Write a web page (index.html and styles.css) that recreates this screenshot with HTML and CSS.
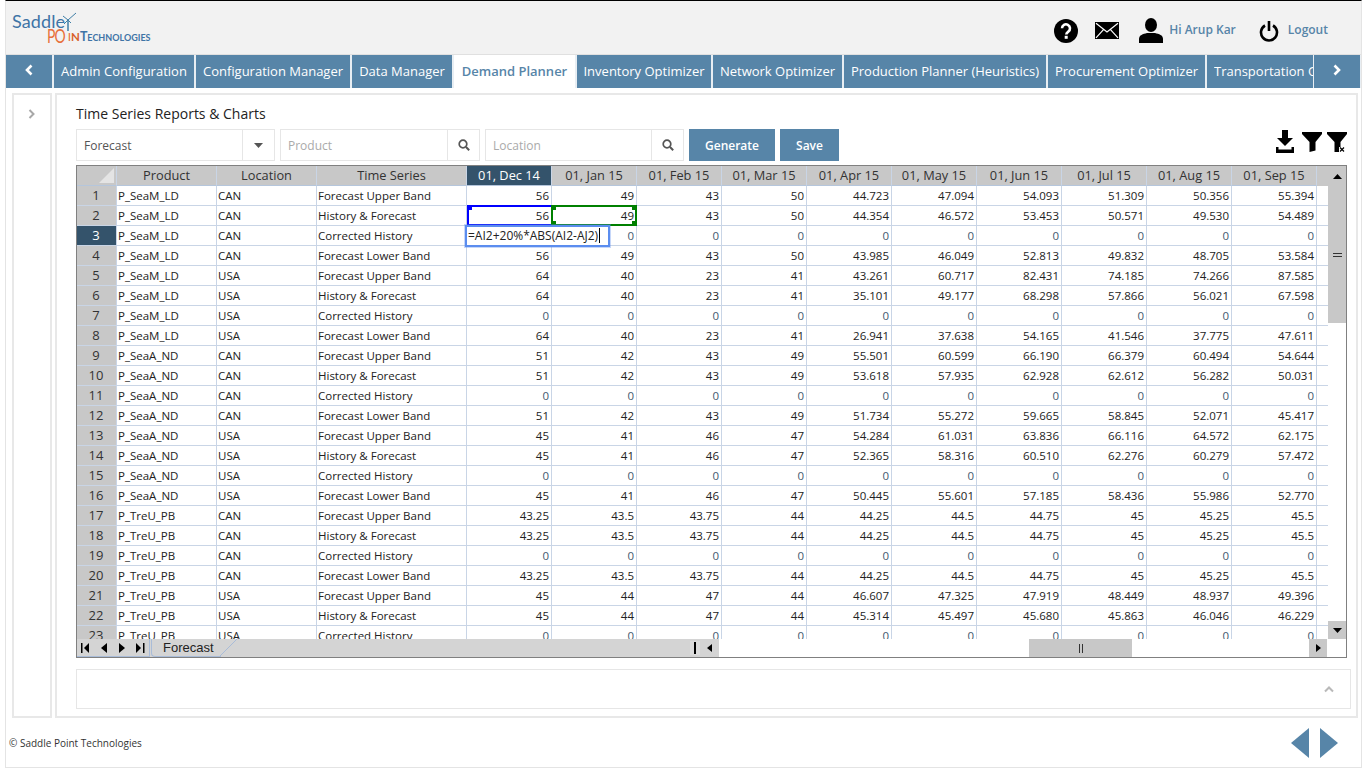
FILE: index.html
```html
<!DOCTYPE html>
<html lang="en">
<head>
<meta charset="utf-8">
<title>Time Series Reports &amp; Charts</title>
<link rel="stylesheet" href="styles.css">
</head>
<body>
<div class="frame">
  <header class="top">
    <div class="logo">
      <div class="logo-l1">Saddle</div>
      <div class="logo-l2"><span class="lo-po">PO</span><span class="lo-i">I</span><span class="lo-n">N</span><span class="bl">Technologies</span></div>
      <svg class="mill" width="18" height="20" viewBox="0 0 18 20"><path d="M8 8 L16 1 M8 8 L3 4 M8 8 L4 12 M8 8 L11 11" stroke="#3f7ea6" stroke-width="1" fill="none"/><path d="M8 8 V19" stroke="#3f7ea6" stroke-width="1.500" fill="none"/></svg>
    </div>
    <div class="top-right">
      <svg class="ic-help" width="24" height="24" viewBox="0 0 24 24"><circle cx="12" cy="12" r="12" fill="#000"/><path d="M8 9.300a4 4 0 1 1 6.300 3.300c-1.300.9-2 1.400-2 3" fill="none" stroke="#fff" stroke-width="2.600"/><rect x="10.700" y="16.800" width="3" height="3" fill="#fff"/></svg>
      <svg class="ic-mail" width="24" height="17" viewBox="0 0 24 17"><rect width="24" height="17" fill="#000"/><path d="M1 1.200 L12 10 L23 1.200 M1 15.800 L8.500 7.600 M23 15.800 L15.500 7.600" fill="none" stroke="#fff" stroke-width="1.200"/></svg>
      <svg class="ic-user" width="24" height="25" viewBox="0 0 24 25"><ellipse cx="12" cy="7" rx="6" ry="7"/><path d="M0 25v-4c0-4 4-5 8-6h8c4 1 8 2 8 6v4z"/></svg>
      <span class="hi">Hi Arup Kar</span>
      <svg class="ic-power" width="20" height="22" viewBox="0 0 20 22"><path d="M6 5.500a8 8 0 1 0 8 0" fill="none" stroke="#000" stroke-width="2.600"/><rect x="8.700" y="1" width="2.600" height="10" fill="#000"/></svg>
      <span class="logout">Logout</span>
    </div>
  </header>
  <nav class="tabs">
    <div class="tab arrow"><svg width="10" height="12" viewBox="0 0 10 12"><path d="M7.500 1.500 L3 6 L7.500 10.500" fill="none" stroke="#fff" stroke-width="2.600"/></svg></div>
    <div class="tab t1">Admin Configuration</div>
    <div class="tab t2">Configuration Manager</div>
    <div class="tab t3">Data Manager</div>
    <div class="tab t4 active">Demand Planner</div>
    <div class="tab t5">Inventory Optimizer</div>
    <div class="tab t6">Network Optimizer</div>
    <div class="tab t7">Production Planner (Heuristics)</div>
    <div class="tab t8">Procurement Optimizer</div>
    <div class="tab t9"><span class="clip">Transportation Optimizer</span></div>
    <div class="tab arrow next"><svg width="10" height="12" viewBox="0 0 10 12"><path d="M2.500 1.500 L7 6 L2.500 10.500" fill="none" stroke="#fff" stroke-width="2.600"/></svg></div>
  </nav>
  <div class="work">
    <aside class="side"><svg width="8" height="10" viewBox="0 0 8 10"><path d="M1.500 1 L5.500 5 L1.500 9" fill="none" stroke="#a8a8a8" stroke-width="2"/></svg></aside>
    <main class="panel">
      <h1 class="title">Time Series Reports &amp; Charts</h1>
      <div class="filters">
        <div class="field f-forecast"><span class="val">Forecast</span><span class="addon"><svg width="9" height="5" viewBox="0 0 9 5"><path d="M0 0H9L4.500 5z" fill="#555"/></svg></span></div>
        <div class="field f-search"><span class="ph">Product</span><span class="addon"><svg width="12" height="12" viewBox="0 0 12 12"><circle cx="5" cy="5" r="3.800" fill="none" stroke="#555" stroke-width="1.700"/><path d="M8 8L11.200 11.200" stroke="#555" stroke-width="2"/></svg></span></div>
        <div class="field f-search f-loc"><span class="ph">Location</span><span class="addon"><svg width="12" height="12" viewBox="0 0 12 12"><circle cx="5" cy="5" r="3.800" fill="none" stroke="#555" stroke-width="1.700"/><path d="M8 8L11.200 11.200" stroke="#555" stroke-width="2"/></svg></span></div>
        <button class="btn b-gen">Generate</button>
        <button class="btn b-save">Save</button>
        <div class="tools">
          <svg class="t-down" width="18" height="23" viewBox="0 0 18 23"><path d="M6 0h6v8h5l-8 8-8-8h5z"/><rect x="0" y="19.500" width="18" height="3.500"/><rect x="0" y="17" width="2.500" height="4"/><rect x="15.500" y="17" width="2.500" height="4"/></svg>
          <svg class="t-fil" width="20" height="20" viewBox="0 0 20 20"><path d="M0 0H20V2L13.500 10V18.500L7.500 20V10L0 2z"/></svg>
          <svg width="20" height="20" viewBox="0 0 20 20"><path d="M0 0H20V2L13.500 10V15H12V20H7.500V10L0 2z"/><path d="M13 15.500l4 4M17 15.500l-4 4" stroke="#000" stroke-width="1.200"/></svg>
        </div>
      </div>
      <div class="sheet">
        <div class="viewport">
          <table class="grid">
            <thead>
              <tr><th class="corner"><span class="tri"></span></th><th>Product</th><th>Location</th><th>Time Series</th><th class="sel">01, Dec 14</th><th>01, Jan 15</th><th>01, Feb 15</th><th>01, Mar 15</th><th>01, Apr 15</th><th>01, May 15</th><th>01, Jun 15</th><th>01, Jul 15</th><th>01, Aug 15</th><th>01, Sep 15</th><th class="pad"></th></tr>
            </thead>
            <tbody>
              <tr><th>1</th><td>P_SeaM_LD</td><td>CAN</td><td>Forecast Upper Band</td><td class="n">56</td><td class="n">49</td><td class="n">43</td><td class="n">50</td><td class="n">44.723</td><td class="n">47.094</td><td class="n">54.093</td><td class="n">51.309</td><td class="n">50.356</td><td class="n">55.394</td><td class="pad"></td></tr>
              <tr><th>2</th><td>P_SeaM_LD</td><td>CAN</td><td>History &amp; Forecast</td><td class="n">56</td><td class="n">49</td><td class="n">43</td><td class="n">50</td><td class="n">44.354</td><td class="n">46.572</td><td class="n">53.453</td><td class="n">50.571</td><td class="n">49.530</td><td class="n">54.489</td><td class="pad"></td></tr>
              <tr class="ch"><th class="sel">3</th><td>P_SeaM_LD</td><td>CAN</td><td>Corrected History</td><td class="n">0</td><td class="n">0</td><td class="n">0</td><td class="n">0</td><td class="n">0</td><td class="n">0</td><td class="n">0</td><td class="n">0</td><td class="n">0</td><td class="n">0</td><td class="pad"></td></tr>
              <tr><th>4</th><td>P_SeaM_LD</td><td>CAN</td><td>Forecast Lower Band</td><td class="n">56</td><td class="n">49</td><td class="n">43</td><td class="n">50</td><td class="n">43.985</td><td class="n">46.049</td><td class="n">52.813</td><td class="n">49.832</td><td class="n">48.705</td><td class="n">53.584</td><td class="pad"></td></tr>
              <tr><th>5</th><td>P_SeaM_LD</td><td>USA</td><td>Forecast Upper Band</td><td class="n">64</td><td class="n">40</td><td class="n">23</td><td class="n">41</td><td class="n">43.261</td><td class="n">60.717</td><td class="n">82.431</td><td class="n">74.185</td><td class="n">74.266</td><td class="n">87.585</td><td class="pad"></td></tr>
              <tr><th>6</th><td>P_SeaM_LD</td><td>USA</td><td>History &amp; Forecast</td><td class="n">64</td><td class="n">40</td><td class="n">23</td><td class="n">41</td><td class="n">35.101</td><td class="n">49.177</td><td class="n">68.298</td><td class="n">57.866</td><td class="n">56.021</td><td class="n">67.598</td><td class="pad"></td></tr>
              <tr class="ch"><th>7</th><td>P_SeaM_LD</td><td>USA</td><td>Corrected History</td><td class="n">0</td><td class="n">0</td><td class="n">0</td><td class="n">0</td><td class="n">0</td><td class="n">0</td><td class="n">0</td><td class="n">0</td><td class="n">0</td><td class="n">0</td><td class="pad"></td></tr>
              <tr><th>8</th><td>P_SeaM_LD</td><td>USA</td><td>Forecast Lower Band</td><td class="n">64</td><td class="n">40</td><td class="n">23</td><td class="n">41</td><td class="n">26.941</td><td class="n">37.638</td><td class="n">54.165</td><td class="n">41.546</td><td class="n">37.775</td><td class="n">47.611</td><td class="pad"></td></tr>
              <tr><th>9</th><td>P_SeaA_ND</td><td>CAN</td><td>Forecast Upper Band</td><td class="n">51</td><td class="n">42</td><td class="n">43</td><td class="n">49</td><td class="n">55.501</td><td class="n">60.599</td><td class="n">66.190</td><td class="n">66.379</td><td class="n">60.494</td><td class="n">54.644</td><td class="pad"></td></tr>
              <tr><th>10</th><td>P_SeaA_ND</td><td>CAN</td><td>History &amp; Forecast</td><td class="n">51</td><td class="n">42</td><td class="n">43</td><td class="n">49</td><td class="n">53.618</td><td class="n">57.935</td><td class="n">62.928</td><td class="n">62.612</td><td class="n">56.282</td><td class="n">50.031</td><td class="pad"></td></tr>
              <tr class="ch"><th>11</th><td>P_SeaA_ND</td><td>CAN</td><td>Corrected History</td><td class="n">0</td><td class="n">0</td><td class="n">0</td><td class="n">0</td><td class="n">0</td><td class="n">0</td><td class="n">0</td><td class="n">0</td><td class="n">0</td><td class="n">0</td><td class="pad"></td></tr>
              <tr><th>12</th><td>P_SeaA_ND</td><td>CAN</td><td>Forecast Lower Band</td><td class="n">51</td><td class="n">42</td><td class="n">43</td><td class="n">49</td><td class="n">51.734</td><td class="n">55.272</td><td class="n">59.665</td><td class="n">58.845</td><td class="n">52.071</td><td class="n">45.417</td><td class="pad"></td></tr>
              <tr><th>13</th><td>P_SeaA_ND</td><td>USA</td><td>Forecast Upper Band</td><td class="n">45</td><td class="n">41</td><td class="n">46</td><td class="n">47</td><td class="n">54.284</td><td class="n">61.031</td><td class="n">63.836</td><td class="n">66.116</td><td class="n">64.572</td><td class="n">62.175</td><td class="pad"></td></tr>
              <tr><th>14</th><td>P_SeaA_ND</td><td>USA</td><td>History &amp; Forecast</td><td class="n">45</td><td class="n">41</td><td class="n">46</td><td class="n">47</td><td class="n">52.365</td><td class="n">58.316</td><td class="n">60.510</td><td class="n">62.276</td><td class="n">60.279</td><td class="n">57.472</td><td class="pad"></td></tr>
              <tr class="ch"><th>15</th><td>P_SeaA_ND</td><td>USA</td><td>Corrected History</td><td class="n">0</td><td class="n">0</td><td class="n">0</td><td class="n">0</td><td class="n">0</td><td class="n">0</td><td class="n">0</td><td class="n">0</td><td class="n">0</td><td class="n">0</td><td class="pad"></td></tr>
              <tr><th>16</th><td>P_SeaA_ND</td><td>USA</td><td>Forecast Lower Band</td><td class="n">45</td><td class="n">41</td><td class="n">46</td><td class="n">47</td><td class="n">50.445</td><td class="n">55.601</td><td class="n">57.185</td><td class="n">58.436</td><td class="n">55.986</td><td class="n">52.770</td><td class="pad"></td></tr>
              <tr><th>17</th><td>P_TreU_PB</td><td>CAN</td><td>Forecast Upper Band</td><td class="n">43.25</td><td class="n">43.5</td><td class="n">43.75</td><td class="n">44</td><td class="n">44.25</td><td class="n">44.5</td><td class="n">44.75</td><td class="n">45</td><td class="n">45.25</td><td class="n">45.5</td><td class="pad"></td></tr>
              <tr><th>18</th><td>P_TreU_PB</td><td>CAN</td><td>History &amp; Forecast</td><td class="n">43.25</td><td class="n">43.5</td><td class="n">43.75</td><td class="n">44</td><td class="n">44.25</td><td class="n">44.5</td><td class="n">44.75</td><td class="n">45</td><td class="n">45.25</td><td class="n">45.5</td><td class="pad"></td></tr>
              <tr class="ch"><th>19</th><td>P_TreU_PB</td><td>CAN</td><td>Corrected History</td><td class="n">0</td><td class="n">0</td><td class="n">0</td><td class="n">0</td><td class="n">0</td><td class="n">0</td><td class="n">0</td><td class="n">0</td><td class="n">0</td><td class="n">0</td><td class="pad"></td></tr>
              <tr><th>20</th><td>P_TreU_PB</td><td>CAN</td><td>Forecast Lower Band</td><td class="n">43.25</td><td class="n">43.5</td><td class="n">43.75</td><td class="n">44</td><td class="n">44.25</td><td class="n">44.5</td><td class="n">44.75</td><td class="n">45</td><td class="n">45.25</td><td class="n">45.5</td><td class="pad"></td></tr>
              <tr><th>21</th><td>P_TreU_PB</td><td>USA</td><td>Forecast Upper Band</td><td class="n">45</td><td class="n">44</td><td class="n">47</td><td class="n">44</td><td class="n">46.607</td><td class="n">47.325</td><td class="n">47.919</td><td class="n">48.449</td><td class="n">48.937</td><td class="n">49.396</td><td class="pad"></td></tr>
              <tr><th>22</th><td>P_TreU_PB</td><td>USA</td><td>History &amp; Forecast</td><td class="n">45</td><td class="n">44</td><td class="n">47</td><td class="n">44</td><td class="n">45.314</td><td class="n">45.497</td><td class="n">45.680</td><td class="n">45.863</td><td class="n">46.046</td><td class="n">46.229</td><td class="pad"></td></tr>
              <tr class="ch"><th>23</th><td>P_TreU_PB</td><td>USA</td><td>Corrected History</td><td class="n">0</td><td class="n">0</td><td class="n">0</td><td class="n">0</td><td class="n">0</td><td class="n">0</td><td class="n">0</td><td class="n">0</td><td class="n">0</td><td class="n">0</td><td class="pad"></td></tr>
            </tbody>
          </table>
          <div class="range blue"><i class="h tl"></i></div>
          <div class="range green"><i class="h tl"></i><i class="h tr"></i><i class="h bl"></i><i class="h br"></i></div>
          <div class="editor">=AI2+20%*ABS(AI2-AJ2)<span class="caret"></span></div>
          <div class="vscroll">
            <div class="vbtn"><svg width="9" height="5" viewBox="0 0 9 5"><path d="M4.500 0L9 5H0z"/></svg></div>
            <div class="vthumb"><span class="grip-h"></span></div>
            <div class="vtrack"></div>
            <div class="vbtn vdown"><svg width="9" height="5" viewBox="0 0 9 5"><path d="M0 0H9L4.500 5z"/></svg></div>
          </div>
        </div>
        <div class="strip">
          <div class="navs">
            <svg width="9" height="10" viewBox="0 0 9 10"><rect width="1.500" height="10" x="0"/><path d="M8 0v10L3 5z"/></svg>
            <svg width="6" height="10" viewBox="0 0 6 10"><path d="M6 0v10L0 5z"/></svg>
            <svg width="6" height="10" viewBox="0 0 6 10"><path d="M0 0v10l6-5z"/></svg>
            <svg width="9" height="10" viewBox="0 0 9 10"><path d="M0 0v10l5-5z"/><rect width="1.500" height="10" x="7"/></svg>
          </div>
          <div class="sheet-tab">Forecast<svg class="tab-slant" width="19" height="18" viewBox="0 0 19 18"><path d="M0 18L18 0" stroke="#a9bcd8" fill="none"/></svg></div>
          <div class="strip-fill"></div>
          <div class="split"><span></span></div>
          <div class="hleft"><svg width="5" height="8" viewBox="0 0 5 8"><path d="M5 0v8L0 4z"/></svg></div>
          <div class="hbar">
            <div class="hthumb"><span class="grip-v"></span></div>
            <div class="hright"><svg width="5" height="8" viewBox="0 0 5 8"><path d="M0 0v8l5-4z"/></svg></div>
          </div>
        </div>
      </div>
      <div class="notes"><svg width="10" height="7" viewBox="0 0 10 7"><path d="M1 5.500L5 1.500L9 5.500" fill="none" stroke="#b9b9b9" stroke-width="2"/></svg></div>
    </main>
  </div>
  <footer class="foot">
    <span class="copy">© Saddle Point Technologies</span>
    <div class="pager">
      <svg width="18" height="30" viewBox="0 0 18 30"><path d="M18 0V30L0 15z" fill="#5785a8"/></svg>
      <svg width="18" height="30" viewBox="0 0 18 30"><path d="M0 0V30L18 15z" fill="#5785a8"/></svg>
    </div>
  </footer>
</div>
</body>
</html>
```
FILE: styles.css
```css
* { box-sizing: border-box; }
html, body { margin: 0; padding: 0; height: 768px; overflow: hidden; background: #fff; }
body { font-family: "Open Sans", "Liberation Sans", sans-serif; color: #333; }
.frame { margin-left: 5px; width: 1357px; height: 768px; border-top: 1px solid #000; border-left: 1px solid #e4e4e4; border-right: 1px solid #e4e4e4; border-bottom: 1px solid #e4e4e4; display: flex; flex-direction: column; }
.top { height: 54px; background: #f2f2f2; border-bottom: 1px solid #e0e0e0; display: flex; justify-content: space-between; align-items: center; flex: none; }
.logo { width: 150px; height: 40px; margin-left: 6px; font-family: "Lato", sans-serif; line-height: 1; position: relative; }
.logo-l1 { color: #3e74a6; font-size: 18px; height: 20px; margin-top: 4px; letter-spacing: .1px; }
.mill { position: absolute; left: 48px; top: 4px; }
.logo-l2 { margin-left: 35px; margin-top: -5px; white-space: nowrap; line-height: 16px; font-variant: small-caps; }
.lo-po { display: inline-block; color: #e8703a; font-size: 14px; letter-spacing: -1px; transform: translateY(2px) scaleY(1.35); transform-origin: 50% 80%; }
.lo-i { color: #e8703a; font-size: 12px; margin-left: 3px; }
.lo-n { color: #d9602a; font-size: 11.500px; font-weight: 700; margin-left: 0; }
.bl { color: #3e74a6; font-size: 12.500px; font-weight: 700; }
.top-right { display: flex; align-items: center; height: 30px; margin-top: 6px; margin-right: 33px; }
.ic-help { margin-right: 17px; }
.ic-mail { margin-right: 20px; }
.ic-user { margin-right: 6px; }
.hi, .logout { color: #5785a8; font-size: 12px; font-weight: 600; margin-top: -3px; }
.hi { margin-right: 23px; }
.ic-power { margin-right: 9px; }
.tabs { display: flex; gap: 2px; height: 33px; flex: none; background: #e8eef3; }
.tab { background: #5785a8; color: #fff; font-size: 13px; line-height: 33px; text-align: center; white-space: nowrap; overflow: hidden; flex: none; }
.tab.arrow { width: 46px; display: flex; align-items: center; justify-content: center; padding-bottom: 3px; }
.tab.next { width: 46px; margin-left: -1px; }
.t1 { width: 140px; } .t2 { width: 154px; } .t3 { width: 100px; } .t4 { width: 121px; } .t5 { width: 134px; } .t6 { width: 129px; } .t7 { width: 202px; } .t8 { width: 157px; } .t9 { width: 106px; text-align: left; padding-left: 7px; }
.clip { display: block; width: 99px; overflow: hidden; }
.tab.active { background: #fff; color: #5785a8; font-weight: 600; }
.work { display: flex; padding: 5px 3px 0 6px; gap: 3px; height: 630px; flex: none; }
.side { width: 40px; height: 625px; border: 2px solid #e8e8e8; display: flex; justify-content: center; padding-top: 14px; }
.panel { width: 1303px; height: 625px; border: 2px solid #e8e8e8; padding: 0 8px 0 19px; display: flex; flex-direction: column; }
.title { margin: 9px 0 0; font-size: 14px; font-weight: 400; color: #222; line-height: 20px; height: 20px; }
.filters { display: flex; height: 32px; margin-top: 5px; align-items: stretch; }
.field { display: flex; border: 1px solid #e6e6e6; font-size: 12px; background: #fff; }
.field > span:first-child { flex: 1; padding-left: 7px; line-height: 32px; }
.val { color: #555; }
.ph { color: #aaa; }
.addon { width: 32px; flex: none !important; border-left: 1px solid #e6e6e6; display: flex; align-items: center; justify-content: center; }
.f-forecast { width: 199px; margin-right: 5px; }
.f-search { width: 200px; margin-right: 5px; }
.f-search.f-loc { width: 199px; }
.btn { border: 0; background: #5785a8; color: #fff; font: 600 12px "Open Sans", sans-serif; padding: 0; }
.b-gen { width: 86px; }
.b-save { width: 59px; margin-left: 5px; }
.tools { margin-left: auto; display: flex; align-items: flex-start; margin-top: 1px; margin-right: 1px; }
.t-down { margin-right: 8px; }
.t-fil { margin-top: 2px; margin-right: 5px; }
.tools svg:last-child { margin-top: 2px; }
.sheet { width: 1271px; height: 493px; margin-top: 4px; border: 1px solid #808080; flex: none; position: relative; }
.viewport { height: 473px; overflow: hidden; position: relative; background: #fff; }
.grid { border-collapse: separate; border-spacing: 0; table-layout: fixed; width: 1269px; font-size: 11.500px; color: #222; }
.grid th, .grid td { height: 20px; padding: 0 2px 0 1px; overflow: hidden; white-space: nowrap; line-height: 19px; border-right: 1px solid #c9d5e6; border-bottom: 1px solid #c9d5e6; }
.grid thead th { background: #c8c8c8; font-weight: 400; font-size: 12.800px; color: #333; border-bottom-color: #b5c6dc; padding: 0; }
.grid tbody th { background: #c8c8c8; font-weight: 400; font-size: 13px; color: #333; }
.grid th.sel { background: #34536b; color: #fff; }
.grid thead th:nth-child(1) { width: 40px; }
.grid thead th:nth-child(2), .grid thead th:nth-child(3) { width: 100px; }
.grid thead th:nth-child(4) { width: 150px; }
.grid thead th:nth-child(n+5) { width: 85px; }
.grid thead th.pad { width: 29px; border-right: 0; border-bottom: 0; }
.grid td.pad { border-right: 0; }
.n { text-align: right; }
.ch .n { color: #44596e; }
.corner { position: relative; }
.tri { position: absolute; right: 2px; bottom: 2px; width: 0; height: 0; border-left: 15px solid transparent; border-bottom: 15px solid #e4e4e4; }
.range { position: absolute; border: 2px solid; pointer-events: none; }
.range.blue { left: 390px; top: 39px; width: 85px; height: 21px; border-color: #0000ff; border-right: 0; }
.range.green { left: 474px; top: 39px; width: 86px; height: 21px; border-color: #008000; }
.h { position: absolute; width: 5px; height: 5px; }
.blue .h { background: #0000ff; }
.green .h { background: #008000; }
.tl { left: -2px; top: -2px; } .tr { right: -2px; top: -2px; } .bl { left: -2px; bottom: -2px; } .br { right: -2px; bottom: -2px; }
.editor { position: absolute; left: 388px; top: 59px; width: 145px; height: 22px; background: #fff; border: 2px solid #5b8def; box-shadow: 0 0 0 1px rgba(91, 141, 239, .35); font-size: 12px; line-height: 18px; color: #222; padding-left: 1px; white-space: nowrap; }
.caret { display: inline-block; width: 1px; height: 15px; background: #000; vertical-align: -3px; margin-left: 1px; }
.vscroll { position: absolute; right: 0; top: 0; bottom: 0; width: 18px; display: flex; flex-direction: column; background: #fff; }
.vbtn { height: 20px; background: #c8c8c8; display: flex; align-items: center; justify-content: center; flex: none; }
.vdown { height: 18px; }
.vthumb { height: 137px; background: #c8c8c8; flex: none; display: flex; align-items: center; justify-content: center; }
.vtrack { flex: 1; background: #fff; }
.grip-h { display: block; width: 9px; height: 4px; border-top: 1px solid #333; border-bottom: 1px solid #333; }
.strip { height: 18px; display: flex; background: #d4d4d4; align-items: stretch; }
.navs { width: 73px; background: #d4d4d4; border-right: 1px solid #a9bcd8; border-bottom: 1px solid #a9bcd8; display: flex; align-items: center; justify-content: space-between; padding: 0 4px; flex: none; }
.sheet-tab { position: relative; width: 70px; margin-left: 1px; padding-left: 11px; font: 13px/18px "Liberation Sans", sans-serif; color: #222; flex: none; border-bottom: 1px solid #a9bcd8; border-left: 1px solid #a9bcd8; border-bottom-left-radius: 4px; }
.tab-slant { position: absolute; right: -18px; top: -1px; }
.strip-fill { width: 469px; flex: none; }
.split { width: 10px; flex: none; margin: 2px 0; background: #dcdcdc; display: flex; align-items: center; justify-content: center; }
.split span { display: block; width: 2px; height: 12px; background: #000; }
.hleft { width: 19px; flex: none; display: flex; align-items: center; justify-content: center; }
.hbar { flex: 1; background: #fff; display: flex; position: relative; padding-left: 310px; padding-right: 19px; justify-content: space-between; }
.hthumb { width: 103px; background: #c8c8c8; display: flex; align-items: center; justify-content: center; }
.grip-v { display: block; width: 4px; height: 9px; border-left: 1px solid #333; border-right: 1px solid #333; }
.hright { width: 18px; background: #c8c8c8; display: flex; align-items: center; justify-content: center; }
.notes { width: 1275px; height: 40px; margin-top: 11px; border: 1px solid #e6e6e6; display: flex; justify-content: flex-end; align-items: center; padding: 0 16px 0 0; flex: none; }
.foot { flex: 1; display: flex; justify-content: space-between; align-items: center; padding: 0 23px 0 3px; }
.copy { font-size: 10px; color: #333; }
.pager { display: flex; gap: 11px; }
```
